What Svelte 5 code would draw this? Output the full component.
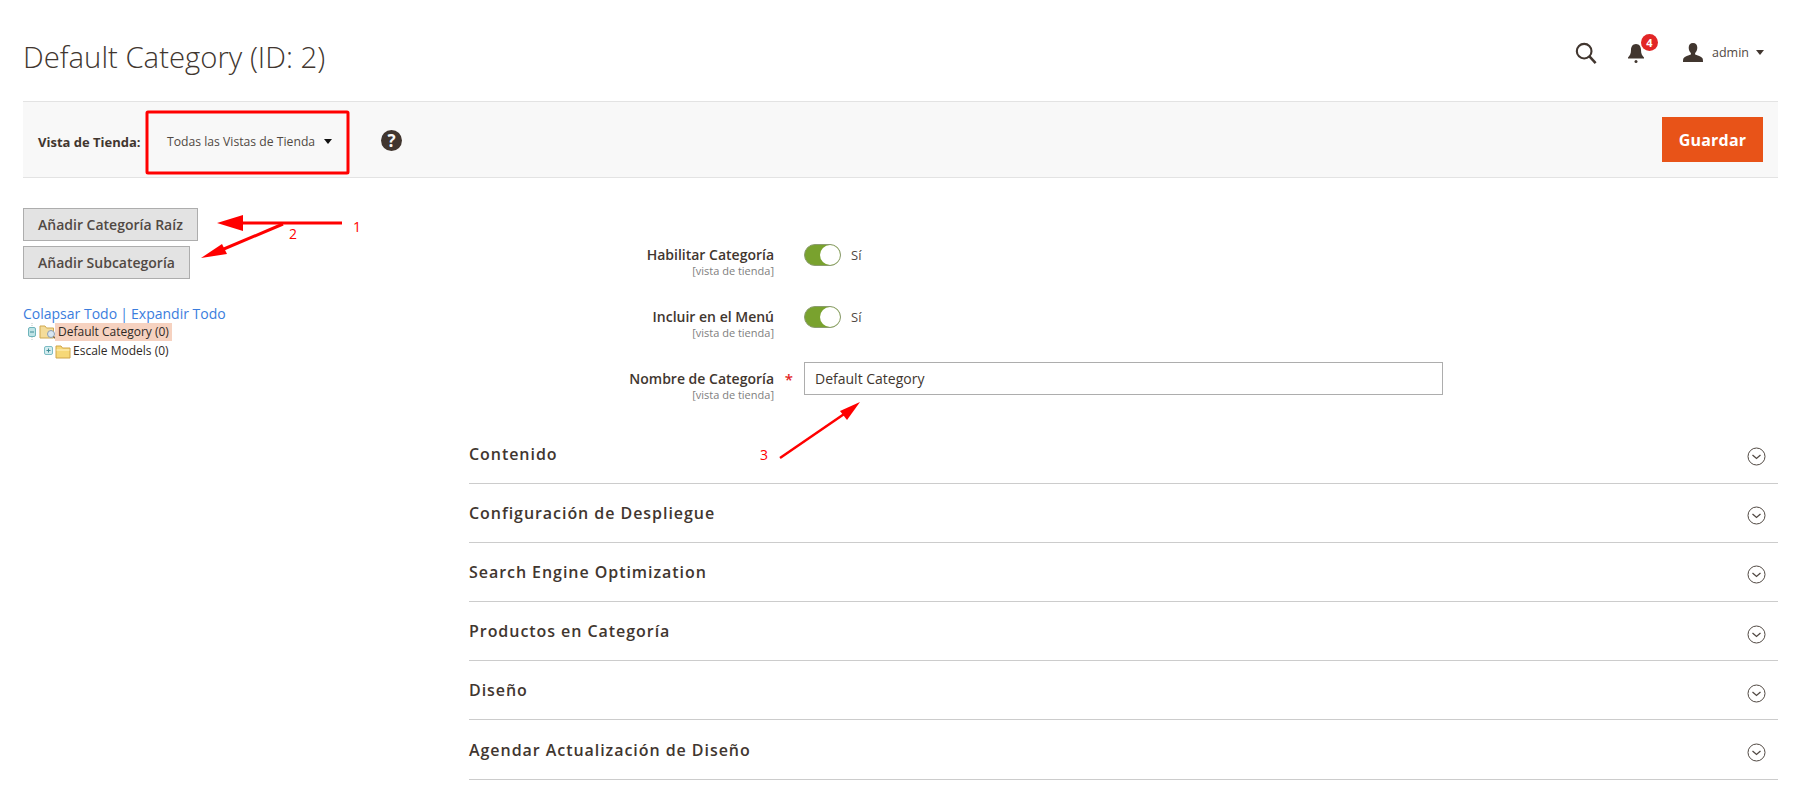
<script>
  const fields = [
    { label: "Habilitar Categoría", type: "toggle" },
    { label: "Incluir en el Menú", type: "toggle" },
    { label: "Nombre de Categoría", type: "input", required: true }
  ];

  const sections = [
    "Contenido",
    "Configuración de Despliegue",
    "Search Engine Optimization",
    "Productos en Categoría",
    "Diseño",
    "Agendar Actualización de Diseño"
  ];
</script>

<div class="page">
  <header class="top">
    <h1>Default Category (ID: 2)</h1>
    <div class="actions">
      <svg class="search" width="22" height="22" viewBox="0 0 24 24" fill="none" stroke="#41362f" stroke-width="2.300">
        <circle cx="10" cy="10" r="8" />
        <path d="M15.500 15.500 L22.500 23" stroke-width="2.800" />
      </svg>
      <div class="bell">
        <svg width="18" height="20" viewBox="0 0 18 20" fill="#41362f">
          <path d="M9 1c-3.400 0-5 2.800-5 6 0 3.600-1.200 5.600-3 7.500v1h16v-1c-1.800-1.900-3-3.900-3-7.500 0-3.200-1.600-6-5-6z" />
          <circle cx="9" cy="18.500" r="1.500" />
        </svg>
        <span class="badge">4</span>
      </div>
      <div class="user">
        <svg width="20" height="19" viewBox="0 0 20 19" fill="#41362f">
          <path d="M10 0c-2.800 0-4.300 2-4.300 4.800 0 2.200.9 4 2.200 5.100v1.700c-2.500 1.100-6.100 1.900-7.400 3.600-.4.600-.5 2.300-.5 3.800h20c0-1.500-.1-3.200-.5-3.800-1.300-1.700-4.900-2.500-7.400-3.600v-1.700c1.300-1.100 2.200-2.900 2.200-5.100 0-2.800-1.500-4.800-4.300-4.800z" />
        </svg>
        <span>admin</span>
        <i class="caret small"></i>
      </div>
    </div>
  </header>

  <div class="bar">
    <b class="store-label">Vista de Tienda:</b>
    <div class="store-select">
      <span>Todas las Vistas de Tienda</span>
      <i class="caret"></i>
    </div>
    <span class="help">?</span>
    <button class="save">Guardar</button>
  </div>

  <div class="content">
    <aside>
      <button class="grey">Añadir Categoría Raíz</button>
      <button class="grey">Añadir Subcategoría</button>
      <div class="links"><span>Colapsar Todo</span> <em>|</em> <span>Expandir Todo</span></div>
      <div class="tree">
        <div class="node">
          <svg width="34" height="18" viewBox="0 0 34 18">
            <path d="M5 0v3M5 14v3" stroke="#b9c4c4" stroke-dasharray="1 1" />
            <rect x="1.500" y="4.500" width="7" height="9" rx="1.500" fill="#bfe3e6" stroke="#6fb4bb" />
            <path d="M3 9h4" stroke="#3f8d96" />
            <path d="M13 3h5l1.500 2h7v10h-13.500z" fill="#f4dc9a" stroke="#cfa84f" />
            <circle cx="24" cy="11" r="3.500" fill="#d9e6f2" stroke="#8d9db0" />
            <path d="M26.500 13.500l2 2" stroke="#8a6a3c" stroke-width="1.500" />
          </svg>
          <span class="hl">Default Category (0)</span>
        </div>
        <div class="node sub">
          <svg width="34" height="18" viewBox="0 0 34 18">
            <rect x="1.500" y="4.500" width="8" height="8" rx="1.500" fill="#d3ecef" stroke="#7dbcc4" />
            <path d="M3.500 8.500h4M5.500 6.500v4" stroke="#3f8d96" />
            <path d="M13 4h5l1.500 2h7.500v10h-14z" fill="#f6d878" stroke="#d0a548" />
            <path d="M13.500 8h13" stroke="#fff3c8" />
          </svg>
          <span>Escale Models (0)</span>
        </div>
      </div>
    </aside>

    <main>
      <div class="fields">
        {#each fields as field}
          <div class="field {field.type}">
            <div class="label">
              <div class="name">{field.label}{#if field.required}<i class="req">*</i>{/if}</div>
              <div class="scope">[vista de tienda]</div>
            </div>
            {#if field.type === "toggle"}
              <div class="switch"><span class="knob"></span></div>
              <span class="yes">Sí</span>
            {:else}
              <input type="text" value="Default Category" />
            {/if}
          </div>
        {/each}
      </div>

      {#each sections as section}
        <div class="section">
          <h2>{section}</h2>
          <svg width="19" height="19" viewBox="0 0 19 19" fill="none" stroke="#514943">
            <circle cx="9.500" cy="9.500" r="8.500" />
            <path d="M5.500 8l4 3.500 4-3.500" stroke-width="1.300" />
          </svg>
        </div>
      {/each}
    </main>
  </div>

  <svg class="notes" width="1794" height="789" viewBox="0 0 1794 789">
    <g fill="none" stroke="#f00">
      <rect x="147" y="112" width="201" height="61" stroke-width="3" rx="1" />
      <path d="M342 223 H230" stroke-width="3" />
      <path d="M283 224 L212 254" stroke-width="3" />
      <path d="M780 458 L850 410" stroke-width="2.500" />
    </g>
    <g fill="#f00">
      <path d="M217 223 L243 215 V231 Z" />
      <path d="M201 258 L222 244 L227 254 Z" />
      <path d="M860 402 L840 411 L847 420 Z" />
    </g>
    <g class="note-num" fill="#f00">
      <text x="353" y="232">1</text>
      <text x="289" y="239">2</text>
      <text x="760" y="460">3</text>
    </g>
  </svg>
</div>

<style>
  :global(body) {
    margin: 0;
    background: #fff;
    font-family: "Open Sans", sans-serif;
    color: #41362f;
  }

  .page {
    position: relative;
    width: 1794px;
    height: 789px;
    overflow: hidden;
    padding: 0 16px 0 23px;
    box-sizing: border-box;
  }

  .top {
    height: 101px;
    display: flex;
    justify-content: space-between;
    align-items: center;
    box-sizing: border-box;
    padding-top: 12px;
  }

  h1 {
    margin: 0;
    font-size: 29.300px;
    font-weight: 300;
    color: #41362f;
  }

  .actions {
    display: flex;
    align-items: center;
    margin-top: -8px;
    padding-right: 14px;
  }

  .search {
    margin-right: 30px;
    margin-left: 2px;
  }

  .bell {
    position: relative;
    height: 20px;
    margin-right: 38px;
  }

  .badge {
    position: absolute;
    top: -9px;
    left: 14px;
    width: 17px;
    height: 17px;
    border-radius: 50%;
    background: #e22626;
    color: #fff;
    font-size: 11px;
    font-weight: 700;
    line-height: 17px;
    text-align: center;
  }

  .user {
    display: flex;
    align-items: center;
    font-size: 12px;
    color: #514943;
    gap: 7px;
  }

  .user span {
    margin-left: 2px;
    font-size: 12.500px;
  }

  .caret {
    display: inline-block;
    width: 0;
    height: 0;
    border-left: 4.500px solid transparent;
    border-right: 4.500px solid transparent;
    border-top: 5px solid #111;
  }

  .caret.small {
    border-top-color: #41362f;
  }

  .bar {
    height: 77px;
    background: #f8f8f8;
    border-top: 1px solid #e3e3e3;
    border-bottom: 1px solid #e3e3e3;
    box-sizing: border-box;
    display: flex;
    align-items: center;
    padding: 0 15px;
  }

  .store-label {
    font-size: 13px;
    font-weight: 700;
    width: 129px;
    flex: none;
    padding-top: 4px;
  }

  .store-select {
    width: 203px;
    flex: none;
    display: flex;
    align-items: center;
    gap: 9px;
    font-size: 12.200px;
    color: #514943;
    padding-top: 4px;
  }

  .help {
    width: 21px;
    height: 21px;
    margin-left: 11px;
    margin-top: 2px;
    border-radius: 50%;
    background: #41362f;
    color: #f8f8f8;
    font-size: 17px;
    font-weight: 700;
    line-height: 21px;
    text-align: center;
  }

  .save {
    margin-left: auto;
    width: 101px;
    height: 45px;
    border: 0;
    background: #e85318;
    color: #fff;
    font: 700 16px "Open Sans", sans-serif;
    letter-spacing: 0.2px;
  }

  .content {
    display: flex;
  }

  aside {
    width: 446px;
    flex: none;
    padding-top: 30px;
  }

  .grey {
    display: block;
    height: 33px;
    margin-bottom: 5px;
    padding: 0 14px;
    background: #e3e3e3;
    border: 1px solid #adadad;
    color: #514943;
    font: 600 14px "Open Sans", sans-serif;
  }

  .links {
    margin-top: 25px;
    font-size: 14px;
    line-height: 20px;
    color: #3b7ddd;
  }

  .links em {
    font-style: normal;
    margin: 0 -0.500px;
  }

  .tree {
    margin-top: -2px;
    font-size: 12px;
    line-height: 18px;
    color: #2f2a26;
  }

  .node {
    display: flex;
    align-items: center;
    height: 19px;
    padding-left: 4px;
  }

  .node svg {
    flex: none;
    margin-right: -6px;
  }

  .node.sub {
    padding-left: 20px;
    margin-top: 0.500px;
  }

  .node.sub svg {
    margin-right: -4px;
  }

  .hl {
    background: #f6d2c0;
    padding: 0 3px;
  }

  main {
    flex: 1;
    min-width: 0;
  }

  .fields {
    padding-top: 66px;
    height: 246.500px;
    box-sizing: border-box;
  }

  .field {
    display: flex;
    align-items: flex-start;
    height: 62px;
  }

  .field.input {
    margin-top: -6px;
  }

  .label {
    width: 305px;
    flex: none;
    text-align: right;
    padding-top: 1px;
  }

  .field.input .label {
    padding-top: 7px;
  }

  .name {
    position: relative;
    font-size: 14px;
    font-weight: 600;
    line-height: 19px;
    color: #41362f;
  }

  .req {
    position: absolute;
    right: -19px;
    top: 1px;
    font-style: normal;
    color: #e22626;
    font-size: 15px;
  }

  .scope {
    font-size: 11px;
    line-height: 13px;
    color: #808080;
  }

  .switch {
    position: relative;
    width: 37px;
    height: 22px;
    margin-left: 30px;
    border-radius: 11px;
    background: #79a22e;
    box-sizing: border-box;
    border: 1px solid #8c9c70;
  }

  .knob {
    position: absolute;
    right: 0;
    top: 0;
    width: 20px;
    height: 20px;
    border-radius: 50%;
    background: #fff;
  }

  .yes {
    margin-left: 10px;
    font-size: 13px;
    line-height: 22px;
    color: #514943;
  }

  input {
    width: 639px;
    height: 33px;
    margin-left: 30px;
    padding: 0 10px;
    box-sizing: border-box;
    border: 1px solid #adadad;
    font: 400 14px "Open Sans", sans-serif;
    color: #41362f;
    outline: none;
  }

  .section {
    height: 59.200px;
    box-sizing: border-box;
    border-bottom: 1px solid #ccc;
    display: flex;
    justify-content: space-between;
    align-items: center;
    padding-right: 12px;
  }

  h2 {
    margin: 0;
    font-size: 16px;
    font-weight: 600;
    letter-spacing: 0.950px;
    color: #41362f;
  }

  .section svg {
    margin-top: 6px;
  }

  .notes {
    position: absolute;
    left: 0;
    top: 0;
    pointer-events: none;
  }

  .note-num {
    font-size: 14px;
  }
</style>
